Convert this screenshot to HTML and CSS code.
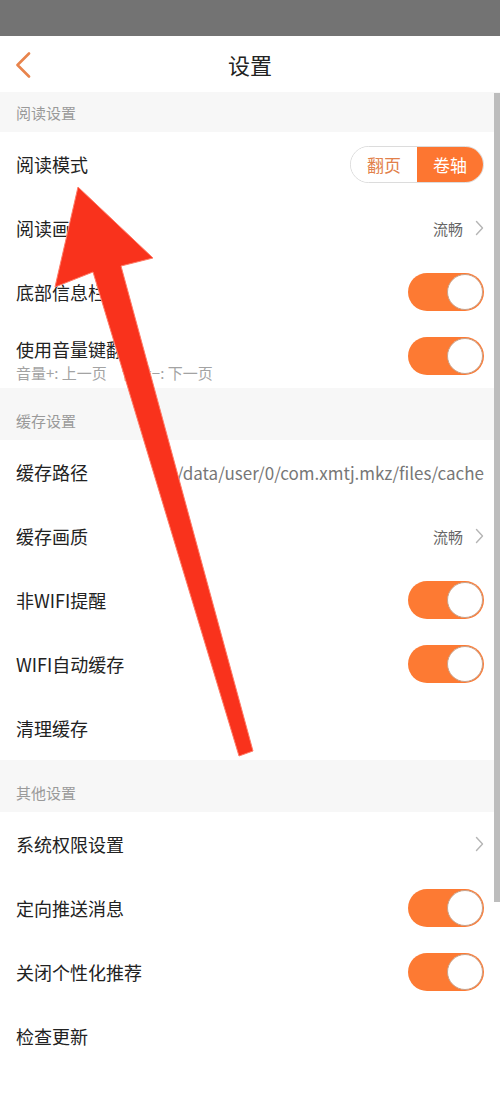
FILE: index.html
```html
<!DOCTYPE html>
<html lang="zh-CN">
<head>
<meta charset="utf-8">
<title>设置</title>
<link rel="stylesheet" href="styles.css">
</head>
<body>
<div class="app">
  <div class="statusbar"></div>
  <header class="topbar">
    <svg class="back" width="16" height="26" viewBox="0 0 16 26"><polyline points="14,1.5 2.5,13 14,24.5" fill="none" stroke="#e8844c" stroke-width="2.6" stroke-linecap="round" stroke-linejoin="round"/></svg>
    <h1 class="title">设置</h1>
  </header>

  <div class="section section-first">阅读设置</div>
  <div class="row">
    <span class="label">阅读模式</span>
    <div class="segment">
      <span class="seg seg-off">翻页</span>
      <span class="seg seg-on">卷轴</span>
    </div>
  </div>
  <div class="row">
    <span class="label">阅读画质</span>
    <span class="value">流畅<svg class="chev" width="9" height="16" viewBox="0 0 9 16"><polyline points="1.5,1.5 7.5,8 1.5,14.5" fill="none" stroke="#b5b5b5" stroke-width="1.4" stroke-linecap="round" stroke-linejoin="round"/></svg></span>
  </div>
  <div class="row">
    <span class="label">底部信息栏</span>
    <span class="toggle"><span class="knob"></span></span>
  </div>
  <div class="row">
    <div class="stack">
      <span class="label">使用音量键翻页</span>
      <span class="sub"><span>音量+: 上一页</span><span>音量−: 下一页</span></span>
    </div>
    <span class="toggle"><span class="knob"></span></span>
  </div>

  <div class="section">缓存设置</div>
  <div class="row">
    <span class="label">缓存路径</span>
    <span class="path">/data/user/0/com.xmtj.mkz/files/cache</span>
  </div>
  <div class="row">
    <span class="label">缓存画质</span>
    <span class="value">流畅<svg class="chev" width="9" height="16" viewBox="0 0 9 16"><polyline points="1.5,1.5 7.5,8 1.5,14.5" fill="none" stroke="#b5b5b5" stroke-width="1.4" stroke-linecap="round" stroke-linejoin="round"/></svg></span>
  </div>
  <div class="row">
    <span class="label">非WIFI提醒</span>
    <span class="toggle"><span class="knob"></span></span>
  </div>
  <div class="row">
    <span class="label">WIFI自动缓存</span>
    <span class="toggle"><span class="knob"></span></span>
  </div>
  <div class="row">
    <span class="label">清理缓存</span>
  </div>

  <div class="section">其他设置</div>
  <div class="row">
    <span class="label">系统权限设置</span>
    <span class="value"><svg class="chev" width="9" height="16" viewBox="0 0 9 16"><polyline points="1.5,1.5 7.5,8 1.5,14.5" fill="none" stroke="#b5b5b5" stroke-width="1.4" stroke-linecap="round" stroke-linejoin="round"/></svg></span>
  </div>
  <div class="row">
    <span class="label">定向推送消息</span>
    <span class="toggle"><span class="knob"></span></span>
  </div>
  <div class="row">
    <span class="label">关闭个性化推荐</span>
    <span class="toggle"><span class="knob"></span></span>
  </div>
  <div class="row">
    <span class="label">检查更新</span>
  </div>

  <div class="scrollbar"></div>
  <svg class="arrow" width="500" height="1111" viewBox="0 0 500 1111">
    <polygon points="78,187 153,258 121,266 253,751 239,756 93,272 55,287" fill="#f9321c" stroke="#ff7a66" stroke-width="1" stroke-linejoin="round"/>
  </svg>
</div>
</body>
</html>
```

FILE: styles.css
```css
* { box-sizing: border-box; margin: 0; padding: 0; }
html, body { width: 500px; height: 1111px; overflow: hidden; background: #fff; }
body { font-family: "Noto Sans CJK SC", "Noto Sans", sans-serif; color: #222; }
.app { position: relative; width: 500px; height: 1111px; overflow: hidden; background: #fff; }
.statusbar { height: 36px; background: #737373; }
.topbar { height: 56px; display: flex; align-items: center; justify-content: center; position: relative; background: #fff; }
.back { position: absolute; left: 15px; top: 16px; }
.title { font-size: 22px; font-weight: 400; color: #222; line-height: 1; }
.section { height: 52px; background: #f7f7f7; color: #9a9a9a; font-size: 15px; line-height: 20px; padding: 0 16px 9px; display: flex; align-items: flex-end; }
.section-first { height: 40px; }
.row { height: 64px; display: flex; align-items: center; justify-content: space-between; padding: 0 16px; }
.label { font-size: 18px; line-height: 22px; color: #222; white-space: nowrap; }
.stack { display: flex; flex-direction: column; gap: 4px; padding-top: 6px; }
.sub { display: flex; gap: 15px; font-size: 15px; line-height: 17px; color: #a3a3a3; white-space: nowrap; }
.value { display: flex; align-items: center; gap: 12px; font-size: 15px; color: #666; }
.chev { display: block; }
.path { font-family: "Noto Sans CJK SC", "Noto Sans", sans-serif; font-size: 17px; color: #777; white-space: nowrap; }
.segment { display: flex; width: 134px; height: 37px; border: 1px solid #dcdcdc; border-radius: 19px; overflow: hidden; }
.seg { flex: 1; display: flex; align-items: center; justify-content: center; font-size: 17px; }
.seg-off { color: #e2804a; background: #fff; }
.seg-on { color: #fff; background: #fd7631; }
.toggle { position: relative; width: 76px; height: 38px; border-radius: 19px; background: #fd7a33; display: block; }
.knob { position: absolute; right: 1px; top: 1px; width: 36px; height: 36px; border-radius: 50%; background: #fff; border: 1px solid #c8a38c; }
.scrollbar { position: absolute; right: 0; top: 93px; width: 6px; height: 809px; background: #bdbdbd; }
.arrow { position: absolute; left: 0; top: 0; pointer-events: none; }
```
